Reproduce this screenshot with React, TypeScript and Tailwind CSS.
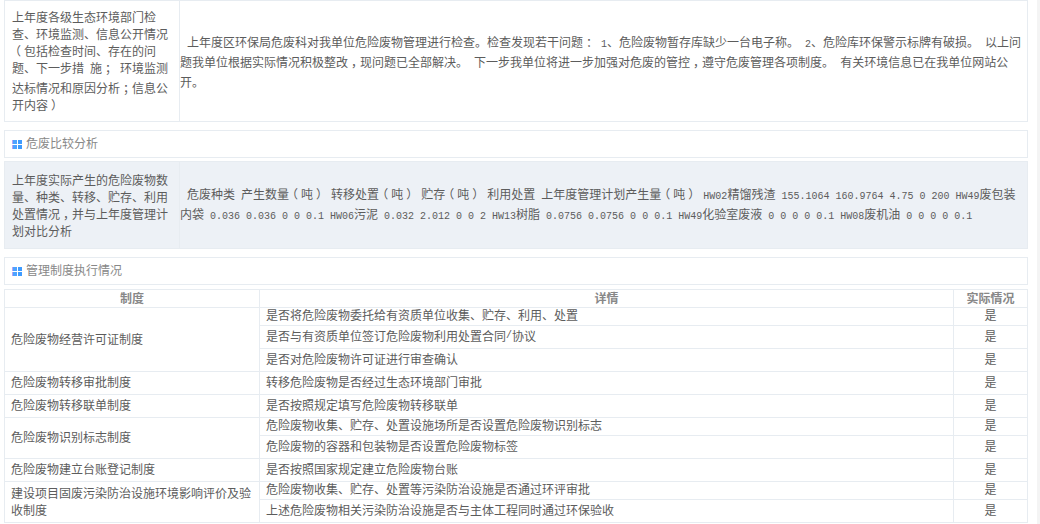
const cjk = "font-['Noto_Sans_CJK_SC',sans-serif]";

// ascii runs are half width in the original font, 10px mono gives the same advance
// full width punctuation sits centred in its cell there, so halve it and pad it back
function Txt({ children }: { children: string }) {
  const parts = children.split(/([\x20-\x7e]+|[（），；：])/).filter(Boolean);
  return (
    <>
      {parts.map((p, i) => {
        if (/^[\x20-\x7e]+$/.test(p)) {
          return (
            <span key={i} className="font-['Liberation_Mono',monospace] text-[10px]">
              {p}
            </span>
          );
        }
        if (/^[（），；：]$/.test(p)) {
          return (
            <span key={i} className="px-[3px] [font-feature-settings:'halt']">
              {p}
            </span>
          );
        }
        return <span key={i}>{p}</span>;
      })}
    </>
  );
}

function SectionTitle({ title }: { title: string }) {
  return (
    <div className="h-[28px] border border-[#e7ecf1] bg-white flex items-center pl-[7px] gap-[4px] text-[12px] text-[#888888]">
      <span className="grid grid-cols-2 gap-px w-[10px] h-[9px] shrink-0">
        <span className="bg-[#4da3ff] border-l border-[#b9a2f5]" />
        <span className="bg-[#3e9bff]" />
        <span className="bg-[#4da3ff] border-l border-[#b9a2f5]" />
        <span className="bg-[#3e9bff]" />
      </span>
      <span className="pb-[2px]">{title}</span>
    </div>
  );
}

function InfoRow({ label, text, grey, height }: { label: string; text: string; grey?: boolean; height: string }) {
  return (
    <div className={`flex border border-[#e7ecf1] ${height} ${grey ? "bg-[#edf1f6]" : "bg-white"}`}>
      <div className="w-[175px] shrink-0 border-r border-[#e7ecf1] pl-[7px] pr-[4px] pb-[1px] flex items-center">
        <p className="leading-[17px]">
          <Txt>{label}</Txt>
        </p>
      </div>
      <div className="flex-1 flex items-center">
        <p className="leading-[17px] indent-[7px] pr-[4px]">
          <Txt>{text}</Txt>
        </p>
      </div>
    </div>
  );
}

const rows = [
  { name: "危险废物经营许可证制度", items: [["是否将危险废物委托给有资质单位收集、贮存、利用、处置", "h-[18px]"], ["是否与有资质单位签订危险废物利用处置合同/协议", "h-[23px]"], ["是否对危险废物许可证进行审查确认", "h-[23px]"]] },
  { name: "危险废物转移审批制度", items: [["转移危险废物是否经过生态环境部门审批", "h-[23px]"]] },
  { name: "危险废物转移联单制度", items: [["是否按照规定填写危险废物转移联单", "h-[23px]"]] },
  { name: "危险废物识别标志制度", items: [["危险废物收集、贮存、处置设施场所是否设置危险废物识别标志", "h-[18px]"], ["危险废物的容器和包装物是否设置危险废物标签", "h-[23px]"]] },
  { name: "危险废物建立台账登记制度", items: [["是否按照国家规定建立危险废物台账", "h-[23px]"]] },
  { name: "建设项目固废污染防治设施环境影响评价及验收制度", items: [["危险废物收集、贮存、处置等污染防治设施是否通过环评审批", "h-[18px]"], ["上述危险废物相关污染防治设施是否与主体工程同时通过环保验收", "h-[23px]"]] },
];

export default function App() {
  return (
    <div className={`flex justify-between w-[1040px] h-[524px] overflow-hidden bg-white pl-[4px] text-[12px] text-[#5c5c5c] ${cjk}`}>
      <div className="w-[1024px]">
        <InfoRow
          height="h-[122px]"
          label="上年度各级生态环境部门检查、环境监测、信息公开情况（包括检查时间、存在的问题、下一步措 施； 环境监测达标情况和原因分析；信息公开内容）"
          text="上年度区环保局危废科对我单位危险废物管理进行检查。检查发现若干问题： 1、危险废物暂存库缺少一台电子称。 2、危险库环保警示标牌有破损。 以上问题我单位根据实际情况积极整改，现问题已全部解决。 下一步我单位将进一步加强对危废的管控，遵守危废管理各项制度。 有关环境信息已在我单位网站公开。"
        />
        <div className="mt-[8px]">
          <SectionTitle title="危废比较分析" />
        </div>
        <div className="mt-[3px]">
          <InfoRow
            grey
            height="h-[88px]"
            label="上年度实际产生的危险废物数量、种类、转移、贮存、利用处置情况，并与上年度管理计划对比分析"
            text="危废种类 产生数量（吨） 转移处置（吨） 贮存（吨） 利用处置 上年度管理计划产生量（吨） HW02精馏残渣 155.1064 160.9764 4.75 0 200 HW49废包装内袋 0.036 0.036 0 0 0.1 HW06污泥 0.032 2.012 0 0 2 HW13树脂 0.0756 0.0756 0 0 0.1 HW49化验室废液 0 0 0 0 0.1 HW08废机油 0 0 0 0 0.1"
          />
        </div>
        <div className="mt-[8px]">
          <SectionTitle title="管理制度执行情况" />
        </div>
        <div className="mt-[4px] border-x border-t border-[#e7ecf1]">
          <div className="flex h-[18px] border-b border-[#e7ecf1] font-bold text-[#888888] text-center leading-[15px]">
            <div className="w-[255px] border-r border-[#e7ecf1]">制度</div>
            <div className="w-[694px] border-r border-[#e7ecf1]">详情</div>
            <div className="flex-1">实际情况</div>
          </div>
          {rows.map((row) => (
            <div key={row.name} className="flex">
              <div className="w-[255px] shrink-0 border-r border-b border-[#e7ecf1] px-[6px] pb-[3px] flex items-center leading-[17px]">
                {row.name}
              </div>
              <div className="flex-1">
                {row.items.map(([text, h]) => (
                  <div key={text} className={`flex ${h} border-b border-[#e7ecf1]`}>
                    <div className="w-[694px] shrink-0 border-r border-[#e7ecf1] px-[6px] pb-[3px] flex items-center">
                      <Txt>{text}</Txt>
                    </div>
                    <div className="flex-1 pb-[3px] flex items-center justify-center">是</div>
                  </div>
                ))}
              </div>
            </div>
          ))}
        </div>
      </div>
      <div className="w-[3px] bg-[#f4f4f4]" />
    </div>
  );
}
